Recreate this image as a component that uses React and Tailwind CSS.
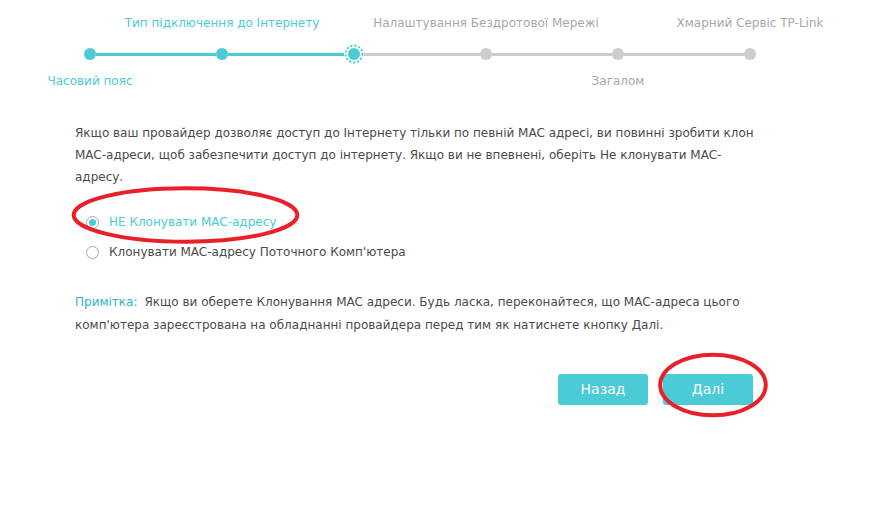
import React from 'react';

const TEAL = 'bg-[#4acbd6]';

const steps = [
  { top: null, bottom: 'Часовий пояс', left: null, right: 'teal', done: true },
  { top: 'Тип підключення до Інтернету', bottom: null, left: 'teal', right: 'teal', done: true },
  { top: null, bottom: null, left: 'teal', right: 'gray', current: true },
  { top: 'Налаштування Бездротової Мережі', bottom: null, left: 'gray', right: 'gray' },
  { top: null, bottom: 'Загалом', left: 'gray', right: 'gray' },
  { top: 'Хмарний Сервіс TP-Link', bottom: null, left: 'gray', right: null },
];

const Half = ({ tone }) => (
  <div className={`h-[3px] flex-1 ${tone === 'teal' ? TEAL : tone === 'gray' ? 'bg-[#cccccc]' : 'bg-transparent'}`} />
);

const CurrentDot = () => (
  <svg width="20" height="20" viewBox="0 0 20 20" className="shrink-0">
    <circle cx="10" cy="10" r="8.5" fill="white" stroke="#4acbd6" strokeWidth="1.8" strokeDasharray="2.2 1.8" />
    <circle cx="10" cy="10" r="6" fill="#4acbd6" />
  </svg>
);

const Stepper = () => (
  <div className="grid grid-cols-[repeat(6,132px)] pl-[24px] pt-[15px] text-[12px] leading-[16px]">
    {steps.map((s, i) => (
      <div key={'t' + i} className={`flex justify-center whitespace-nowrap h-[16px] ${s.done ? 'text-[#4acbd6]' : 'text-[#a8a8a8]'}`}>
        {s.top}
      </div>
    ))}
    {steps.map((s, i) => (
      <div key={'d' + i} className="flex items-center h-[20px] mt-[13px]">
        <Half tone={s.left} />
        {s.current ? (
          <CurrentDot />
        ) : (
          <div className={`w-[12px] h-[12px] rounded-full ${s.done ? TEAL : 'bg-[#cccccc]'}`} />
        )}
        <Half tone={s.right} />
      </div>
    ))}
    {steps.map((s, i) => (
      <div key={'b' + i} className={`flex justify-center whitespace-nowrap h-[16px] mt-[9px] ${s.done ? 'text-[#4acbd6]' : 'text-[#a8a8a8]'}`}>
        {s.bottom}
      </div>
    ))}
  </div>
);

const Radio = ({ checked, children }) => (
  <label className="flex items-center gap-[10px] h-[20px]">
    <span className="w-[13px] h-[13px] rounded-full border border-[#a9a9a9] bg-white flex items-center justify-center">
      {checked && <span className={`w-[7px] h-[7px] rounded-full ${TEAL}`} />}
    </span>
    <span className={checked ? 'text-[#4acbd6]' : 'text-[#4a4a4a]'}>{children}</span>
  </label>
);

const Ring = ({ className }) => (
  <svg className={`absolute pointer-events-none ${className}`} viewBox="0 0 100 100" preserveAspectRatio="none">
    <ellipse cx="50" cy="50" rx="48" ry="46" fill="none" stroke="#e8202a" strokeWidth="4" vectorEffect="non-scaling-stroke" />
  </svg>
);

export default function App() {
  return (
    <div className="relative w-[893px] h-[505px] bg-white overflow-hidden text-[#4a4a4a]" style={{ fontFamily: '"DejaVu Sans", Verdana, sans-serif' }}>
      <Stepper />

      <div className="pl-[75px] pr-[130px] pt-[33px] text-[12px]">
        <p className="leading-[22px] w-[685px]">
          Якщо ваш провайдер дозволяє доступ до Інтернету тільки по певній MAC адресі, ви повинні зробити клон MAC-адреси, щоб забезпечити доступ до інтернету. Якщо ви не впевнені, оберіть Не клонувати MAC-адресу.
        </p>

        <div className="flex flex-col gap-[10px] pl-[11px] mt-[24px]">
          <Radio checked>НЕ Клонувати MAC-адресу</Radio>
          <Radio>Клонувати MAC-адресу Поточного Комп'ютера</Radio>
        </div>

        <p className="leading-[23px] w-[685px] mt-[29px]">
          <span className="text-[#2fb4c8] mr-[7px]">Примітка:</span>Якщо ви оберете Клонування MAC адреси. Будь ласка, переконайтеся, що MAC-адреса цього комп'ютера зареєстрована на обладнанні провайдера перед тим як натиснете кнопку Далі.
        </p>

        <div className="flex justify-end gap-[15px] w-[678px] mt-[37px]">
          <button className={`w-[90px] h-[31px] rounded-[3px] ${TEAL} text-white text-[14px]`}>Назад</button>
          <button className={`w-[90px] h-[31px] rounded-[3px] ${TEAL} text-white text-[14px]`}>Далі</button>
        </div>
      </div>

      <Ring className="left-[69px] top-[186px] w-[233px] h-[58px]" />
      <Ring className="left-[658px] top-[352px] w-[110px] h-[66px]" />
    </div>
  );
}
